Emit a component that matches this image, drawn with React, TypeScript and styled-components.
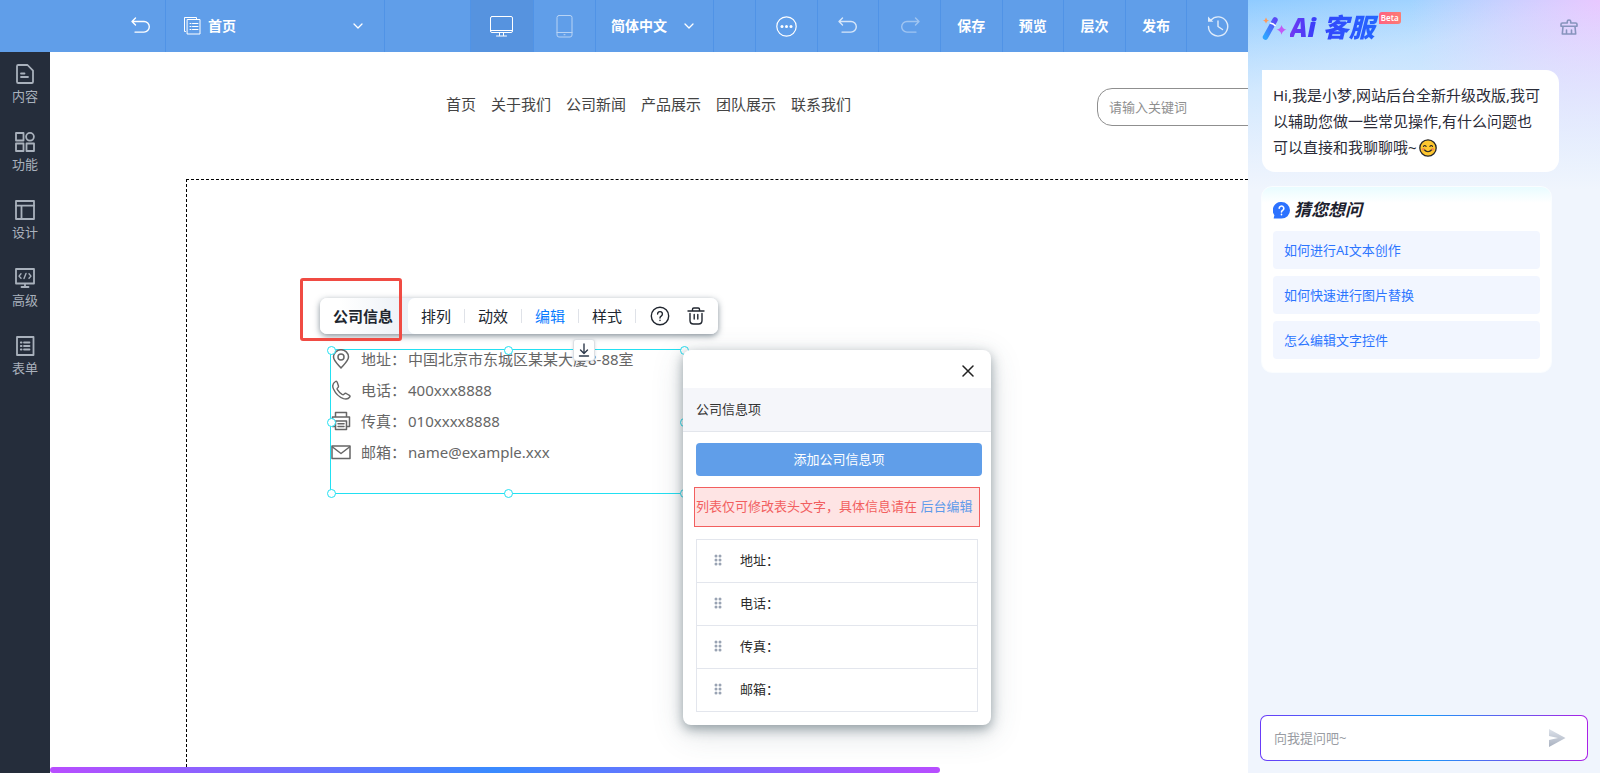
import React from "react";
import styled, { createGlobalStyle, css } from "styled-components";

const GlobalStyle = createGlobalStyle`
  *, *::before, *::after { box-sizing: border-box; }
  body {
    margin: 0;
    font-family: "Noto Sans", "Noto Sans CJK SC", sans-serif;
    font-size: 13px;
    line-height: 20px;
    color: #333;
    background: #fff;
  }
  button, input, select { font: inherit; color: inherit; margin: 0; }
  button { border: 0; padding: 0; background: none; cursor: pointer; }
  ul { list-style: none; margin: 0; padding: 0; }
  svg { display: block; flex: none; }
`;

/* ---------- icons ---------- */

type IconProps = { width?: number; height?: number; stroke?: string; sw?: number; children: React.ReactNode };

const Icon = ({ width = 20, height = 20, stroke = "currentColor", sw = 1, children }: IconProps) => (
  <svg
    width={width}
    height={height}
    viewBox={`0 0 ${width} ${height}`}
    fill="none"
    stroke={stroke}
    strokeWidth={sw}
    strokeLinecap="round"
    strokeLinejoin="round"
    aria-hidden="true"
  >
    {children}
  </svg>
);

const UndoIcon = () => (
  <Icon sw={1.4}>
    <path d="M4.500 2 1 5.500 4.500 9M1.400 5.500H13a5.200 5.200 0 0 1 0 10.600H4" />
  </Icon>
);
const RedoIcon = () => (
  <Icon sw={1.4}>
    <path d="M15.500 2 19 5.500 15.500 9M18.600 5.500H7a5.200 5.200 0 0 0 0 10.600h9" />
  </Icon>
);
const PagesIcon = () => (
  <Icon width={17} height={18}>
    <path d="M1.500 14.500h-1V.500h12v1.500" />
    <rect x="3.500" y="2.500" width="12.500" height="14.500" />
    <path d="M6 6.500h1M8.500 6.500H14M6 9.500h1M8.500 9.500H14M6 12.500h1M8.500 12.500H14" />
  </Icon>
);
const ChevronIcon = () => (
  <Icon width={10} height={6} sw={1.3}>
    <path d="m1 1 4 4 4-4" />
  </Icon>
);
const DesktopIcon = () => (
  <Icon width={23} height={21}>
    <rect x=".5" y=".5" width="22" height="16" rx="1.500" />
    <path d="M1 14.500h21M9.500 17v2.500M13.500 17v2.500M6.500 20h10" />
  </Icon>
);
const PhoneIcon = () => (
  <Icon width={17} height={23}>
    <rect x="1" y=".5" width="15" height="21.500" rx="2" />
    <path d="M1 17.500h15M8 19.700h1" />
  </Icon>
);
const MoreIcon = () => (
  <Icon width={21} height={21} sw={1.2}>
    <circle cx="10.500" cy="10.500" r="9.700" />
    <g fill="currentColor" stroke="none">
      <circle cx="6" cy="10.500" r="1.500" />
      <circle cx="10.500" cy="10.500" r="1.500" />
      <circle cx="15" cy="10.500" r="1.500" />
    </g>
  </Icon>
);
const HistoryIcon = () => (
  <Icon width={22} height={22} sw={1.4}>
    <path d="M4 5a9.600 9.600 0 1 1-2.500 6.500M11 6v5.500l4.500 3" />
    <path d="M1 1.500v5.300h5.300z" fill="currentColor" stroke="none" />
  </Icon>
);

const ContentIcon = () => (
  <Icon sw={1.8}>
    <path d="M2 2.300Q2 1 3.200 1h9.300L18 6.700v11q0 1.300-1.200 1.300H3.200Q2 19 2 17.700zM6 9.500h3.500M6 13h7" />
  </Icon>
);
const FeatureIcon = () => (
  <Icon sw={1.8}>
    <rect x="1" y="1" width="7.500" height="7.500" />
    <circle cx="15" cy="4.800" r="3.900" />
    <rect x="1" y="11.500" width="7.500" height="7.500" />
    <rect x="11.500" y="11.500" width="7.500" height="7.500" />
  </Icon>
);
const LayoutIcon = () => (
  <Icon sw={1.8}>
    <rect x="1" y="1" width="18" height="18" />
    <path d="M1 5.700h18M6.500 6v13" />
  </Icon>
);
const CodeIcon = () => (
  <Icon sw={1.8}>
    <rect x="1" y="1" width="18" height="14.500" />
    <path d="M10 16v2.700M6.500 19h7" />
    <path d="m6 5.800-2 2.300 2 2.200M14 5.800l2 2.300-2 2.200M11 5.500l-2 5" strokeWidth="1.400" />
  </Icon>
);
const FormIcon = () => (
  <Icon sw={1.8}>
    <rect x="2" y="1" width="16.500" height="18" />
    <path d="M5.800 6.500h.8M9 6.500h5.500M5.800 10h.8M9 10h5.500M5.800 13.500h.8M9 13.500h5.500" />
  </Icon>
);

const HelpIcon = () => (
  <Icon sw={1.4}>
    <circle cx="10" cy="10" r="8.700" />
    <path d="M7.600 8a2.400 2.400 0 1 1 3.600 2.100c-.8.500-1.200.9-1.200 1.900M10 14.300v.2" />
  </Icon>
);
const TrashIcon = () => (
  <Icon sw={1.4}>
    <path d="M2 5h16M6.500 4.500V3.300q0-1.300 1.300-1.300h4.400q1.300 0 1.300 1.300v1.200M4 7.500v7q0 3.500 3.500 3.500h5q3.500 0 3.500-3.500v-7M8.200 8.500v4.500M11.800 8.500v4.500" />
  </Icon>
);
const ArrowDownIcon = () => (
  <Icon width={14} height={14} sw={1.4}>
    <path d="M7 1v9M3.500 7 7 10.500 10.500 7M2.500 13h9" />
  </Icon>
);
const CloseIcon = () => (
  <Icon width={12} height={12} sw={1.5}>
    <path d="m1 1 10 10M11 1 1 11" />
  </Icon>
);

const PinIcon = () => (
  <Icon sw={1.5}>
    <path d="M10 19C6.500 15 2.500 11.500 2.500 8a7.500 7.300 0 0 1 15 0c0 3.500-4 7-7.500 11z" />
    <circle cx="10" cy="8" r="3" />
  </Icon>
);
const CallIcon = () => (
  <Icon sw={1.4}>
    <path d="M4.500 1.500C2 3 .8 5.300 2.500 9c2 4.500 5.500 8 10 9.600 3 .9 5.300-.2 6.300-1.600.5-.8.200-1.300-.4-1.700l-3.200-1.800c-.8-.4-1.300-.2-1.800.4-.7 1-1.400 1-2.300.5-2-1.200-3.500-2.700-4.700-4.700-.5-.9-.4-1.500.3-2 .8-.6 1-1 .7-1.900L6.200 2.200c-.4-.9-1-1.100-1.700-.7z" />
  </Icon>
);
const FaxIcon = () => (
  <Icon sw={1.500}>
    <path d="M4.500 6V1.500h11V6M4.500 15.500H1.500V6h17v9.500h-3" />
    <path d="M4.500 10h11v8.500h-11zM7 12.800h6M7 15.500h6" />
  </Icon>
);
const MailIcon = () => (
  <Icon sw={1.5}>
    <rect x="1" y="4" width="18" height="12.500" />
    <path d="m1.500 5 8.500 6.500L18.500 5" />
  </Icon>
);
const DragIcon = () => (
  <svg width="8" height="12" viewBox="0 0 8 12" fill="#99a3b3" aria-hidden="true">
    {[2, 6].map((x) => [2, 6, 10].map((y) => <circle key={`${x}${y}`} cx={x} cy={y} r="1.500" />))}
  </svg>
);

const WandIcon = () => (
  <svg width="25" height="24" viewBox="0 0 25 24" aria-hidden="true">
    <defs>
      <linearGradient id="wand" x1="0" y1="1" x2="1" y2="0">
        <stop offset="0" stopColor="#2fa4ff" />
        <stop offset="1" stopColor="#5a4bf6" />
      </linearGradient>
    </defs>
    <path d="M3.500 21 13 4" stroke="url(#wand)" strokeWidth="5.500" strokeLinecap="round" />
    <path d="M8 7q3.500.5 5.500 3" stroke="#fff" strokeWidth="1.600" fill="none" />
    <path d="M4 1.500Q4.500 4 7 4.500 4.500 5 4 7.500 3.500 5 1 4.500 3.500 4 4 1.500z" fill="#ff9a5a" />
    <path d="M19.500 9q1 4 5 4.700-4 .8-5 5-.8-4.200-5-5 4.200-.7 5-4.700z" fill="#c25af5" />
  </svg>
);
const BroomIcon = () => (
  <Icon width={18} height={16} sw={1.6} stroke="#8794bd">
    <path d="M7.300 4V2.300Q7.300 1 9 1t1.700 1.300V4h5q1.300 0 1.300 1.200v2H1v-2Q1 4 2.300 4zM3 7.500 2.300 15h13.400L15 7.500M6.500 14.500V11M11.500 14.500V11" />
  </Icon>
);
const AskIcon = () => (
  <svg width="17" height="17" viewBox="0 0 17 17" aria-hidden="true">
    <path d="M8.500 0a8.500 8.300 0 1 1 0 16.600H1.200q-.8 0-.4-.8l.6-2.600A8.300 8.300 0 0 1 8.500 0z" fill="#2c72ff" />
    <path d="M6.200 6.300a2.300 2.300 0 1 1 3.400 2.100c-.8.500-1.100.8-1.100 1.600M8.500 12.400v.3" fill="none" stroke="#fff" strokeWidth="1.600" strokeLinecap="round" />
  </svg>
);
const SendIcon = () => (
  <svg width="18" height="18" viewBox="0 0 18 18" aria-hidden="true">
    <defs>
      <linearGradient id="send" x1="0" y1="0" x2="0" y2="1">
        <stop offset="0" stopColor="#dde2ea" />
        <stop offset="1" stopColor="#a9b1c0" />
      </linearGradient>
    </defs>
    <path d="M1 0 17.500 9 1 18v-7l9-2-9-2z" fill="url(#send)" />
  </svg>
);
const SmileIcon = styled.svg.attrs({
  width: 18,
  height: 18,
  viewBox: "0 0 18 18",
  role: "img",
  "aria-label": "微笑",
})`
  display: inline-block;
  vertical-align: middle;
  margin: 0 0 2px 2px;
`;

/* ---------- page frame ---------- */

const Page = styled.div`
  display: flex;
  height: 100vh;
  min-height: 740px;
  overflow: hidden;
`;
const Editor = styled.div`
  flex: 1;
  min-width: 0;
  display: flex;
  flex-direction: column;
`;
const TopBar = styled.header`
  display: flex;
  flex: none;
  height: 52px;
  background: #609ee9;
  color: #fff;
  font-size: 14px;
  font-weight: 700;
`;
const cell = css`
  display: flex;
  align-items: center;
  justify-content: center;
  flex: none;
  height: 100%;
  border-left: 1px solid #5093e6;
`;
const BackCell = styled.div`
  display: flex;
  align-items: center;
  justify-content: flex-end;
  flex: none;
  width: 165px;
  padding-right: 14px;
`;
const Gap = styled.div<{ $grow?: boolean; $w?: number }>`
  ${cell}
  ${(p) => (p.$grow ? "flex: 1;" : `width: ${p.$w}px;`)}
`;
const ButtonGroup = styled.div<{ $w: number }>`
  display: flex;
  flex: none;
  width: ${(p) => p.$w}px;
`;
const BarButton = styled.button<{ $active?: boolean; $dim?: number }>`
  ${cell}
  flex: 1;
  font-weight: 700;
  background: ${(p) => (p.$active ? "#5693df" : "none")};
  & > svg { opacity: ${(p) => p.$dim ?? 1}; }
`;
const PickerCell = styled.label<{ $w: number }>`
  ${cell}
  width: ${(p) => p.$w}px;
  padding: 0 21px 0 18px;
  gap: 7px;
`;
const Picker = styled.select`
  appearance: none;
  flex: 1;
  min-width: 0;
  border: 0;
  padding: 0;
  background: none;
  outline: 0;
  font-weight: 700;
`;
const LanguageCell = styled(PickerCell)`
  padding: 0 19px 0 15px;
`;

const Workspace = styled.div`
  flex: 1;
  min-height: 0;
  display: flex;
`;
const SideBar = styled.nav`
  flex: none;
  width: 50px;
  padding-top: 12px;
  background: #252d3b;
  color: #a9b1bc;
`;
const SideItem = styled.button`
  display: flex;
  flex-direction: column;
  align-items: center;
  gap: 2px;
  width: 100%;
  height: 68px;
`;
const Stage = styled.main`
  position: relative;
  flex: 1;
  min-width: 0;
  display: flex;
  flex-direction: column;
  overflow: hidden;
`;
const ProgressLine = styled.div`
  flex: none;
  width: 890px;
  max-width: 100%;
  height: 6px;
  border-radius: 3px;
  background: linear-gradient(90deg, #b84dff, #398bff 50%, #b84dff);
`;

/* ---------- site being edited ---------- */

const SiteHeader = styled.div`
  display: flex;
  flex: none;
  align-items: flex-start;
  height: 127px;
  padding: 36px 0 0 396px;
`;
const SiteNav = styled.nav`
  display: flex;
  flex: none;
  gap: 15px;
  width: 651px;
  padding-top: 6px;
`;
const SiteLink = styled.a`
  color: #444;
  font-size: 15px;
  text-decoration: none;
`;
const SearchBox = styled.input`
  flex: none;
  width: 240px;
  height: 38px;
  padding: 0 11px;
  border: 1px solid #8f8f8f;
  border-radius: 15px;
  outline: 0;
  &::placeholder { color: #8f8f8f; opacity: 1; }
`;
const SiteSection = styled.section`
  flex: 1;
  margin-left: 136px;
  border: dashed #000;
  border-width: 1px 0 0 1px;
`;

const Selection = styled.div`
  position: absolute;
  left: 280px;
  top: 297px;
  width: 355px;
  height: 145px;
  border: 1px solid #22e0f2;
`;
const Handle = styled.span<{ $x: number; $y: number }>`
  position: absolute;
  left: ${(p) => p.$x}%;
  top: ${(p) => p.$y}%;
  width: 9px;
  height: 9px;
  margin: -4px 0 0 -4px;
  border: 1px solid #22e0f2;
  border-radius: 50%;
  background: #fff;
`;
const InfoList = styled.ul`
  margin-top: -7px;
`;
const InfoRow = styled.li`
  display: flex;
  align-items: center;
  height: 31px;
  color: #666;
  font-size: 15px;
`;
const InfoLabel = styled.span`
  margin: 0 2px 0 10px;
`;
const MoveDown = styled.button`
  position: absolute;
  left: 523px;
  top: 287px;
  display: grid;
  place-items: center;
  width: 22px;
  height: 22px;
  border: 1px solid #dcdfe3;
  border-radius: 3px;
  background: #fff;
  color: #2f3b4c;
  box-shadow: 0 1px 3px rgba(60, 70, 90, 0.2);
`;

const WidgetBar = styled.div`
  position: absolute;
  left: 270px;
  top: 246px;
  display: flex;
  height: 36px;
  width: 398px;
  border-radius: 7px;
  background: linear-gradient(90deg, #fff 20px, #e9eef5 100px);
  color: #20262f;
  font-size: 15px;
  box-shadow: 0 2px 6px rgba(50, 68, 84, 0.6);
`;
const WidgetName = styled.strong`
  flex: none;
  width: 88px;
  padding-left: 13px;
  line-height: 36px;
`;
const WidgetActions = styled.div`
  display: flex;
  flex: 1;
  align-items: center;
  border-radius: 7px;
  background: #fff;
`;
const WidgetAction = styled.button<{ $on?: boolean }>`
  width: 57px;
  height: 14px;
  line-height: 14px;
  border-right: 1px solid #dfe2e8;
  color: ${(p) => (p.$on ? "#0a7cff" : "inherit")};
`;
const WidgetTools = styled.div`
  display: flex;
  flex: 1;
  justify-content: space-between;
  padding: 0 12px 0 14px;
`;
const Highlight = styled.div`
  position: absolute;
  left: 250px;
  top: 226px;
  width: 102px;
  height: 63px;
  border: 3px solid #f04b43;
  border-radius: 3px;
  pointer-events: none;
`;

/* ---------- settings dialog ---------- */

const Dialog = styled.section`
  position: absolute;
  left: 633px;
  top: 298px;
  width: 308px;
  padding-bottom: 13px;
  border-radius: 8px;
  background: #fff;
  box-shadow: 0 4px 12px rgba(62, 82, 92, 0.5), 0 8px 32px rgba(62, 82, 92, 0.18);
`;
const DialogTop = styled.div`
  display: flex;
  align-items: center;
  justify-content: flex-end;
  height: 38px;
  padding: 4px 17px 0;
  color: #222;
`;
const DialogTitle = styled.h2`
  margin: 0;
  height: 44px;
  padding: 0 13px;
  border-bottom: 1px solid #e3e6ec;
  background: #f5f6fa;
  font-size: 13px;
  font-weight: 400;
  line-height: 43px;
`;
const AddButton = styled.button`
  display: block;
  width: 286px;
  height: 33px;
  margin: 11px 0 0 13px;
  padding-bottom: 2px;
  border-radius: 4px;
  background: #609ee9;
  color: #fff;
`;
const Notice = styled.p`
  width: 286px;
  height: 40px;
  margin: 11px 0 0 11px;
  padding-left: 1px;
  border: 1px solid #f25f5f;
  background: #fee4e4;
  color: #f25f5f;
  line-height: 36px;
  white-space: nowrap;
`;
const NoticeLink = styled.a`
  color: #5f9bea;
  text-decoration: none;
`;
const FieldList = styled.ul`
  margin: 12px 13px 0;
  border: 1px solid #e3e6ed;
`;
const FieldItem = styled.li`
  display: flex;
  align-items: center;
  gap: 18px;
  height: 42px;
  padding: 0 0 3px 17px;
  color: #2b2b2b;
  & + & {
    height: 43px;
    border-top: 1px solid #e3e6ed;
  }
`;

/* ---------- assistant ---------- */

const Assistant = styled.aside`
  flex: none;
  display: flex;
  flex-direction: column;
  width: 352px;
  padding: 12px;
  background:
    linear-gradient(180deg, rgba(240, 245, 253, 0) 0, rgba(240, 245, 253, 0.35) 60px, #f0f5fd 190px),
    radial-gradient(circle at 100% 0, #e8c8ff 0, rgba(226, 206, 255, 0) 190px),
    linear-gradient(165deg, #8fcbff 0, #b4dcff 90px, #bfdcff 190px);
`;
const AssistantTop = styled.header`
  display: flex;
  align-items: flex-start;
  justify-content: space-between;
  height: 58px;
  padding: 0 10px 0 2px;
`;
const Brand = styled.h1`
  display: flex;
  align-items: flex-start;
  margin: 0;
  & > svg { margin-top: 4px; }
`;
const BrandText = styled.span`
  margin-left: 3px;
  padding-right: 4px;
  font-size: 26px;
  line-height: 30px;
  font-weight: 900;
  font-style: italic;
  color: transparent;
  background: linear-gradient(90deg, #7238f2, #3540fb 30%, #2368ff);
  background-clip: text;
  -webkit-background-clip: text;
`;
const Beta = styled.span`
  height: 12px;
  padding: 0 2px;
  border-radius: 3px 1px 3px 0;
  background: linear-gradient(90deg, #ff6181, #fb7d74);
  color: #fff;
  font-size: 8px;
  font-weight: 600;
  line-height: 12px;
`;
const ClearButton = styled.button`
  margin-top: 7px;
`;
const Bubble = styled.p`
  margin: 0 0 0 2px;
  width: 297px;
  min-height: 102px;
  padding: 12px 14px 12px 11px;
  border-radius: 0 13px 13px 13px;
  background: #fff;
  color: #2b2c38;
  font-size: 15px;
  line-height: 26px;
`;
const AskCard = styled.section`
  margin: 14px 0 0 1px;
  width: 291px;
  padding: 12px 11px 13px;
  border: 1px solid #fafdff;
  border-radius: 11px;
  background: linear-gradient(180deg, #e9fcff 0, #fff 16px);
`;
const AskTitle = styled.h2`
  display: flex;
  align-items: center;
  gap: 4px;
  margin: 0 0 10px;
  height: 22px;
  color: #20212e;
  font-size: 17px;
  font-style: italic;
  font-weight: 700;
`;
const AskList = styled.ul`
  display: grid;
  gap: 7px;
`;
const AskItem = styled.button`
  display: block;
  width: 100%;
  height: 38px;
  padding-left: 11px;
  border-radius: 4px;
  background: #f2f6ff;
  color: #2c75ff;
  text-align: left;
`;
const ChatForm = styled.form`
  display: flex;
  align-items: center;
  height: 46px;
  margin-top: auto;
  padding: 0 21px 0 13px;
  border: 1px solid transparent;
  border-radius: 7px;
  background:
    linear-gradient(#fff, #fff) padding-box,
    linear-gradient(90deg, #6a3cf8, #189af8 50%, #ab20e6) border-box;
`;
const ChatInput = styled.input`
  flex: 1;
  min-width: 0;
  border: 0;
  padding: 0;
  outline: 0;
  background: none;
  &::placeholder { color: #999ca3; opacity: 1; }
`;

/* ---------- data ---------- */

const sideItems = [
  { label: "内容", icon: <ContentIcon /> },
  { label: "功能", icon: <FeatureIcon /> },
  { label: "设计", icon: <LayoutIcon /> },
  { label: "高级", icon: <CodeIcon /> },
  { label: "表单", icon: <FormIcon /> },
];
const siteLinks = ["首页", "关于我们", "公司新闻", "产品展示", "团队展示", "联系我们"];
const infoRows = [
  { icon: <PinIcon />, label: "地址：", value: "中国北京市东城区某某大厦8-88室" },
  { icon: <CallIcon />, label: "电话：", value: "400xxx8888" },
  { icon: <FaxIcon />, label: "传真：", value: "010xxxx8888" },
  { icon: <MailIcon />, label: "邮箱：", value: "name@example.xxx" },
];
const handles = [
  [0, 0], [50, 0], [100, 0],
  [0, 50], [100, 50],
  [0, 100], [50, 100], [100, 100],
];
const questions = ["如何进行AI文本创作", "如何快速进行图片替换", "怎么编辑文字控件"];

export default function App() {
  return (
    <Page>
      <GlobalStyle />
      <Editor>
        <TopBar>
          <BackCell>
            <button aria-label="返回"><UndoIcon /></button>
          </BackCell>
          <PickerCell $w={219}>
            <PagesIcon />
            <Picker aria-label="页面"><option>首页</option></Picker>
            <ChevronIcon />
          </PickerCell>
          <Gap $grow />
          <ButtonGroup $w={125}>
            <BarButton $active aria-label="电脑版"><DesktopIcon /></BarButton>
            <BarButton $dim={0.55} aria-label="手机版"><PhoneIcon /></BarButton>
          </ButtonGroup>
          <LanguageCell $w={118}>
            <Picker aria-label="语言"><option>简体中文</option></Picker>
            <ChevronIcon />
          </LanguageCell>
          <Gap $w={42} />
          <ButtonGroup $w={493}>
            <BarButton aria-label="更多"><MoreIcon /></BarButton>
            <BarButton $dim={0.75} aria-label="撤销"><UndoIcon /></BarButton>
            <BarButton $dim={0.4} aria-label="重做"><RedoIcon /></BarButton>
            <BarButton>保存</BarButton>
            <BarButton>预览</BarButton>
            <BarButton>层次</BarButton>
            <BarButton>发布</BarButton>
            <BarButton $dim={0.8} aria-label="历史"><HistoryIcon /></BarButton>
          </ButtonGroup>
        </TopBar>
        <Workspace>
          <SideBar>
            {sideItems.map((s) => (
              <SideItem key={s.label}>{s.icon}<span>{s.label}</span></SideItem>
            ))}
          </SideBar>
          <Stage>
            <SiteHeader>
              <SiteNav>
                {siteLinks.map((l) => <SiteLink key={l} href="#">{l}</SiteLink>)}
              </SiteNav>
              <SearchBox type="search" aria-label="搜索" placeholder="请输入关键词" />
            </SiteHeader>
            <SiteSection />
            <Selection>
              <InfoList>
                {infoRows.map((r) => (
                  <InfoRow key={r.label}>
                    {r.icon}
                    <InfoLabel>{r.label}</InfoLabel>
                    <span>{r.value}</span>
                  </InfoRow>
                ))}
              </InfoList>
              {handles.map(([x, y]) => <Handle key={`${x}-${y}`} $x={x} $y={y} />)}
            </Selection>
            <WidgetBar>
              <WidgetName>公司信息</WidgetName>
              <WidgetActions>
                <WidgetAction>排列</WidgetAction>
                <WidgetAction>动效</WidgetAction>
                <WidgetAction $on>编辑</WidgetAction>
                <WidgetAction>样式</WidgetAction>
                <WidgetTools>
                  <button aria-label="帮助"><HelpIcon /></button>
                  <button aria-label="删除"><TrashIcon /></button>
                </WidgetTools>
              </WidgetActions>
            </WidgetBar>
            <MoveDown aria-label="下移"><ArrowDownIcon /></MoveDown>
            <Highlight />
            <Dialog>
              <DialogTop>
                <button aria-label="关闭"><CloseIcon /></button>
              </DialogTop>
              <DialogTitle>公司信息项</DialogTitle>
              <AddButton>添加公司信息项</AddButton>
              <Notice>
                列表仅可修改表头文字，具体信息请在 <NoticeLink href="#">后台编辑</NoticeLink>
              </Notice>
              <FieldList>
                {infoRows.map((r) => (
                  <FieldItem key={r.label}>
                    <button aria-label="拖动排序"><DragIcon /></button>
                    {r.label}
                  </FieldItem>
                ))}
              </FieldList>
            </Dialog>
            <ProgressLine />
          </Stage>
        </Workspace>
      </Editor>
      <Assistant>
        <AssistantTop>
          <Brand>
            <WandIcon />
            <BrandText>Ai 客服</BrandText>
            <Beta>Beta</Beta>
          </Brand>
          <ClearButton aria-label="清空对话"><BroomIcon /></ClearButton>
        </AssistantTop>
        <Bubble>
          Hi,我是小梦,网站后台全新升级改版,我可以辅助您做一些常见操作,有什么问题也可以直接和我聊聊哦~
          <SmileIcon>
            <circle cx="9" cy="9" r="8.200" fill="#fdc62f" stroke="#25262b" strokeWidth="1.300" />
            <path d="M4.500 7.300q1.300-1.600 2.600 0M10.900 7.300q1.300-1.600 2.600 0M5 10.500q4 4.500 8 0" fill="none" stroke="#25262b" strokeWidth="1.200" strokeLinecap="round" />
            <circle cx="4.200" cy="10.200" r="1.300" fill="#f58a4b" />
            <circle cx="13.800" cy="10.200" r="1.300" fill="#f58a4b" />
          </SmileIcon>
        </Bubble>
        <AskCard>
          <AskTitle><AskIcon />猜您想问</AskTitle>
          <AskList>
            {questions.map((q) => <li key={q}><AskItem>{q}</AskItem></li>)}
          </AskList>
        </AskCard>
        <ChatForm onSubmit={(e) => e.preventDefault()}>
          <ChatInput aria-label="提问" placeholder="向我提问吧~" />
          <button aria-label="发送"><SendIcon /></button>
        </ChatForm>
      </Assistant>
    </Page>
  );
}
